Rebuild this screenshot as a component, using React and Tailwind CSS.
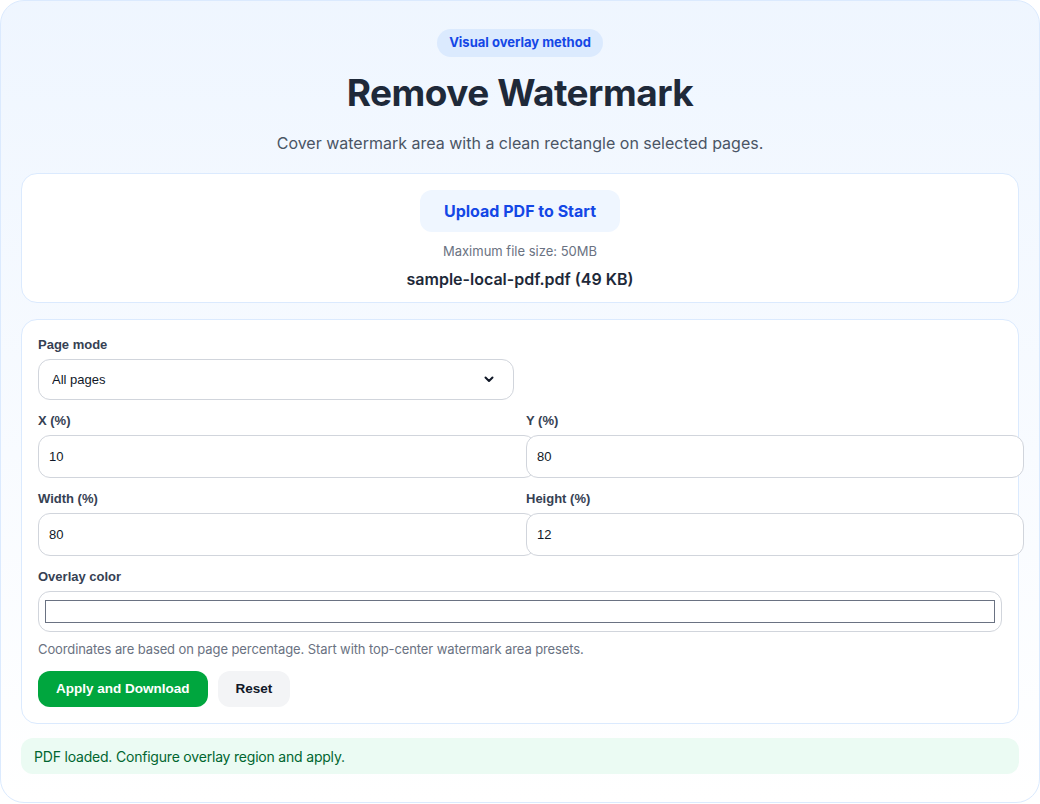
import React, { useState } from 'react';

function Field({ label, value, onChange }) {
    return (
        <div>
            <label className="block font-['Liberation_Sans',sans-serif] text-[13px] font-bold text-gray-700 mb-[6px] leading-4">{label}</label>
            <input
                type="number"
                value={value}
                onChange={(e) => onChange(e.target.value)}
                className="box-content w-full h-[23px] px-[10px] py-[9px] font-['Liberation_Sans',sans-serif] text-[13px] text-gray-900 bg-white border border-gray-300 rounded-xl outline-none [appearance:textfield]"
            />
        </div>
    );
}

export default function App() {
    const [mode, setMode] = useState('all');
    const [x, setX] = useState('10');
    const [y, setY] = useState('80');
    const [w, setW] = useState('80');
    const [h, setH] = useState('12');
    const [color, setColor] = useState('#ffffff');

    const reset = () => {
        setX('10');
        setY('80');
        setW('80');
        setH('12');
        setColor('#ffffff');
    };

    return (
        <div className="w-[1040px] h-[804px] font-['Inter',sans-serif]">
            <div className="h-[803px] rounded-[24px] border border-blue-100 bg-gradient-to-b from-blue-50 to-white px-5 pt-7">
                {/* header */}
                <div className="flex flex-col items-center">
                    <span className="rounded-full bg-blue-100 px-3 h-7 flex items-center text-[13px] font-bold text-blue-700">
                        Visual overlay method
                    </span>
                    <h1 className="mt-[12px] text-[37px] leading-[48px] font-bold tracking-[-0.5px] text-gray-800">Remove Watermark</h1>
                    <p className="mt-[14px] text-[16px] leading-6 text-gray-600">
                        Cover watermark area with a clean rectangle on selected pages.
                    </p>
                </div>

                {/* upload */}
                <div className="mt-[18px] h-[130px] rounded-2xl border border-blue-100 bg-white flex flex-col items-center pt-4">
                    <button className="h-[42px] px-6 rounded-xl bg-blue-50 text-[16px] font-bold text-blue-700">
                        Upload PDF to Start
                    </button>
                    <p className="mt-[11px] text-[13px] leading-4 text-gray-500">Maximum file size: 50MB</p>
                    <p className="mt-[10px] text-[16px] leading-5 font-semibold text-gray-800">sample-local-pdf.pdf (49 KB)</p>
                </div>

                {/* form */}
                <div className="mt-4 rounded-2xl border border-blue-100 bg-white px-4 pt-[17px] pb-4">
                    <div className="grid grid-cols-2 gap-x-3 gap-y-[13px]">
                        <div>
                            <label className="block font-['Liberation_Sans',sans-serif] text-[13px] font-bold text-gray-700 mb-[6px] leading-4">Page mode</label>
                            <div className="relative">
                                <select
                                    value={mode}
                                    onChange={(e) => setMode(e.target.value)}
                                    className="appearance-none w-full h-[41px] pl-[13px] pr-8 font-['Liberation_Sans',sans-serif] text-[13px] text-gray-900 bg-white border border-gray-300 rounded-xl outline-none"
                                >
                                    <option value="all">All pages</option>
                                    <option value="first">First page</option>
                                    <option value="custom">Custom range</option>
                                </select>
                                <svg className="pointer-events-none absolute right-[20px] top-[17px]" width="10" height="7" viewBox="0 0 10 7" fill="none">
                                    <path d="M1.5 1.5 L5 5 L8.5 1.5" stroke="#111827" strokeWidth="2" strokeLinecap="round" strokeLinejoin="round" />
                                </svg>
                            </div>
                        </div>
                        <div />
                        <Field label="X (%)" value={x} onChange={setX} />
                        <Field label="Y (%)" value={y} onChange={setY} />
                        <Field label="Width (%)" value={w} onChange={setW} />
                        <Field label="Height (%)" value={h} onChange={setH} />
                        <div className="col-span-2">
                            <label className="block font-['Liberation_Sans',sans-serif] text-[13px] font-bold text-gray-700 mb-[6px] leading-4">Overlay color</label>
                            <div className="h-[41px] border border-gray-300 rounded-xl bg-white px-[6px] py-[8px]">
                                <input
                                    type="color"
                                    value={color}
                                    onChange={(e) => setColor(e.target.value)}
                                    className="block w-full h-[23px] border border-gray-500 appearance-none p-0 cursor-pointer [&::-webkit-color-swatch-wrapper]:p-0 [&::-webkit-color-swatch]:border-0"
                                />
                            </div>
                        </div>
                    </div>
                    <p className="mt-[9px] text-[13px] leading-4 tracking-[-0.1px] text-gray-500">
                        Coordinates are based on page percentage. Start with top-center watermark area presets.
                    </p>
                    <div className="mt-[14px] flex gap-[10px] font-['Liberation_Sans',sans-serif]">
                        <button className="h-9 px-[18px] rounded-xl bg-green-600 text-[13.5px] font-bold text-white">
                            Apply and Download
                        </button>
                        <button onClick={reset} className="h-9 px-[18px] rounded-xl bg-gray-100 text-[13.5px] font-bold text-gray-900">
                            Reset
                        </button>
                    </div>
                </div>

                {/* status */}
                <div className="mt-[14px] h-[36px] rounded-xl bg-[#ebfbf3] px-[13px] flex items-center text-[14px] tracking-[-0.2px] text-green-800">
                    PDF loaded. Configure overlay region and apply.
                </div>
            </div>
        </div>
    );
}
